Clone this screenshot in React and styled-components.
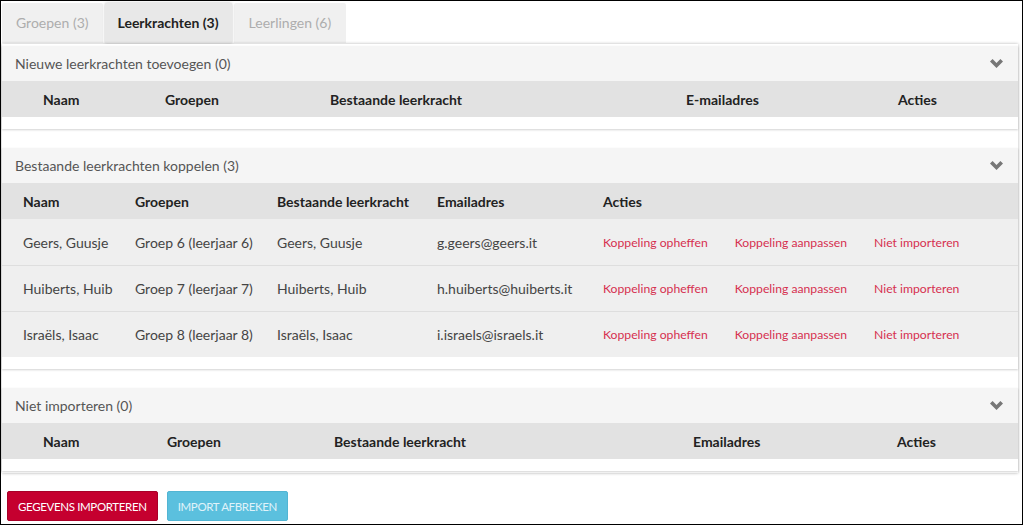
import React from "react";
import styled, { createGlobalStyle } from "styled-components";

const GlobalStyle = createGlobalStyle`
  html, body {
    margin: 0;
    padding: 0;
    background: #fff;
  }
  body {
    font-family: Lato, "Noto Sans", "Liberation Sans", sans-serif;
    font-size: 14px;
    color: #444;
  }
`;

const emptyCols = "41px 122px 165px 356px 212px 1fr";
const emptyColsAlt = "41px 124px 167px 359px 204px 1fr";
const linkedCols = "21px 112px 142px 160px 166px 1fr";

const teachers = [
  {
    name: "Geers, Guusje",
    group: "Groep 6 (leerjaar 6)",
    existing: "Geers, Guusje",
    email: "g.geers@geers.it"
  },
  {
    name: "Huiberts, Huib",
    group: "Groep 7 (leerjaar 7)",
    existing: "Huiberts, Huib",
    email: "h.huiberts@huiberts.it"
  },
  {
    name: "Israëls, Isaac",
    group: "Groep 8 (leerjaar 8)",
    existing: "Israëls, Isaac",
    email: "i.israels@israels.it"
  }
];

const Chevron = () => (
  <svg width="13" height="9" viewBox="0 0 13 9">
    <path d="M0 2.6 L2.6 0 L6.5 3.9 L10.4 0 L13 2.6 L6.5 9 Z" fill="#777" />
  </svg>
);

const Section = ({ title, cols, headers, children }) => (
  <Card>
    <CardHeader>
      <CardTitle>{title}</CardTitle>
      <Chevron />
    </CardHeader>
    <HeadRow cols={cols}>
      <span />
      {headers.map(h => (
        <HeadCell key={h}>{h}</HeadCell>
      ))}
    </HeadRow>
    {children}
    <CardFooter />
  </Card>
);

const App = () => {
  return (
    <>
      <GlobalStyle />
      <Frame>
        <Tabs>
          <Tab>Groepen (3)</Tab>
          <Tab active>Leerkrachten (3)</Tab>
          <Tab wide>Leerlingen (6)</Tab>
        </Tabs>
        <Panel>
          <Section
            title="Nieuwe leerkrachten toevoegen (0)"
            cols={emptyCols}
            headers={["Naam", "Groepen", "Bestaande leerkracht", "E-mailadres", "Acties"]}
          />
          <Section
            title="Bestaande leerkrachten koppelen (3)"
            cols={linkedCols}
            headers={["Naam", "Groepen", "Bestaande leerkracht", "Emailadres", "Acties"]}
          >
            {teachers.map(t => (
              <BodyRow key={t.email} cols={linkedCols}>
                <span />
                <span>{t.name}</span>
                <span>{t.group}</span>
                <span>{t.existing}</span>
                <span>{t.email}</span>
                <Actions>
                  <ActionLink href="#">Koppeling opheffen</ActionLink>
                  <ActionLink href="#">Koppeling aanpassen</ActionLink>
                  <ActionLink href="#">Niet importeren</ActionLink>
                </Actions>
              </BodyRow>
            ))}
          </Section>
          <Section
            title="Niet importeren (0)"
            cols={emptyColsAlt}
            headers={["Naam", "Groepen", "Bestaande leerkracht", "Emailadres", "Acties"]}
          />
        </Panel>
        <ButtonBar>
          <Button variant="primary">Gegevens importeren</Button>
          <Button variant="info">Import afbreken</Button>
        </ButtonBar>
      </Frame>
    </>
  );
};

const Frame = styled.div`
  width: 1023px;
  height: 525px;
  box-sizing: border-box;
  border: 1px solid #000;
  padding: 1px 4px 0 1px;
  overflow: hidden;
`;

const Tabs = styled.div`
  display: flex;
  gap: 2px;
  height: 41px;
  padding-top: 1px;
  box-sizing: border-box;
`;

const Tab = styled.div`
  height: 40px;
  line-height: 40px;
  padding: 0 ${p => (p.wide ? "15px" : p.active ? "13px" : "14px")};
  font-size: 14px;
  background: ${p => (p.active ? "#e8e8e8" : "#f0f0f0")};
  color: ${p => (p.active ? "#222" : "#adadad")};
  font-weight: ${p => (p.active ? 700 : 400)};
  border-radius: 2px 2px 0 0;
  box-shadow: ${p => (p.active ? "0 0 3px rgba(0,0,0,0.25)" : "none")};
  position: relative;
  z-index: ${p => (p.active ? 1 : 0)};
`;

const Panel = styled.div`
  margin-top: 1px;
  background: #fff;
  box-shadow: 0 0 3px rgba(0, 0, 0, 0.3);
  padding: 2px 0 2px;
  display: flex;
  flex-direction: column;
  gap: 19px;
  position: relative;
  z-index: 2;
`;

const Card = styled.div`
  background: #fff;
  box-shadow: 0 1px 2px rgba(0, 0, 0, 0.18);
`;

const CardHeader = styled.div`
  height: 35px;
  background: #f5f5f5;
  display: flex;
  align-items: center;
  justify-content: space-between;
  padding: 0 15px 0 13px;
`;

const CardTitle = styled.span`
  font-size: 14px;
  color: #555;
`;

const HeadRow = styled.div`
  display: grid;
  grid-template-columns: ${p => p.cols};
  align-items: center;
  height: 36px;
  background: #e2e2e2;
`;

const HeadCell = styled.span`
  font-weight: 700;
  color: #222;
  font-size: 14px;
`;

const BodyRow = styled.div`
  display: grid;
  grid-template-columns: ${p => p.cols};
  align-items: center;
  height: 46px;
  background: #efefef;
  color: #444;
  font-size: 14px;
  & + & {
    border-top: 1px solid #dedede;
    height: 45px;
  }
`;

const Actions = styled.div`
  display: flex;
  gap: 27px;
`;

const ActionLink = styled.a`
  color: #d6304f;
  font-size: 12.2px;
  text-decoration: none;
`;

const CardFooter = styled.div`
  height: 12px;
  background: #fff;
`;

const ButtonBar = styled.div`
  display: flex;
  gap: 9px;
  margin: 18px 0 0 5px;
`;

const Button = styled.button`
  height: 30px;
  padding: 0 10px;
  border-radius: 2px;
  font-family: inherit;
  font-size: 11.5px;
  letter-spacing: -0.35px;
  text-transform: uppercase;
  cursor: pointer;
  border: 1px solid ${p => (p.variant === "primary" ? "#a80028" : "#52b5d3")};
  background: ${p => (p.variant === "primary" ? "#c5002f" : "#5bc0de")};
  color: ${p => (p.variant === "primary" ? "#fff" : "#e0f3fa")};
`;

export default App;
